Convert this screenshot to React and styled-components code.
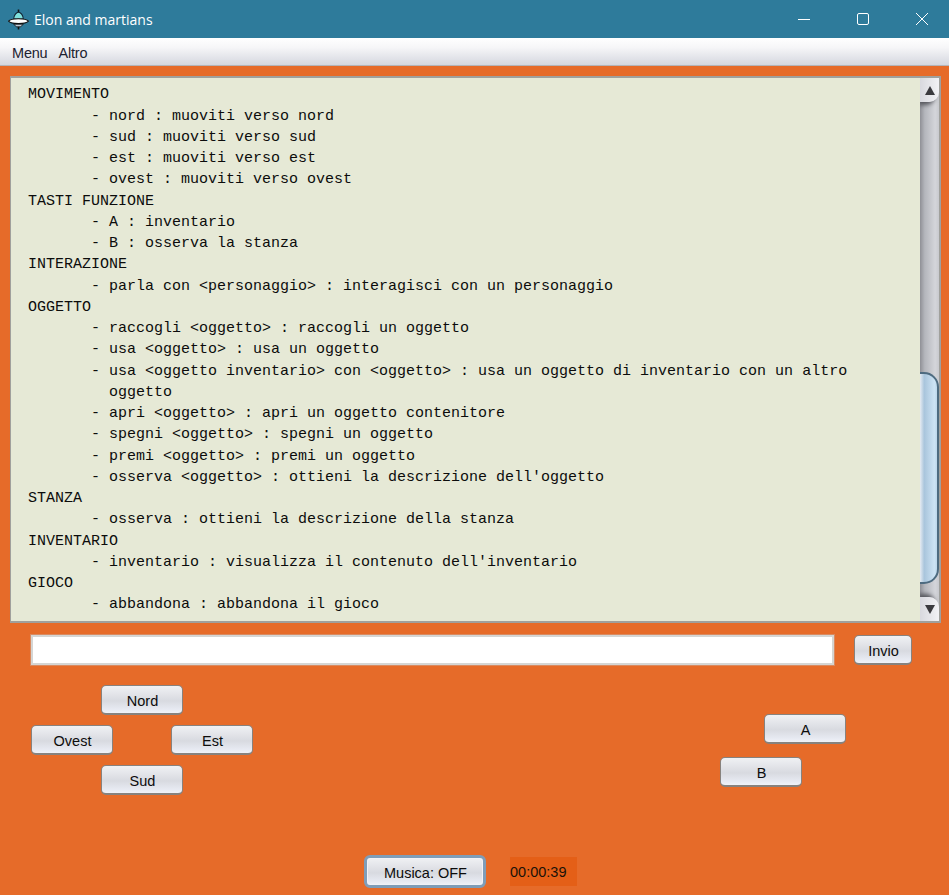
import React from "react";
import styled, { createGlobalStyle } from "styled-components";

const GlobalStyle = createGlobalStyle`
  html, body {
    margin: 0;
    padding: 0;
    background: #e66b29;
  }
  * {
    box-sizing: border-box;
  }
`;

const Window = styled.div`
  width: 949px;
  height: 895px;
  display: flex;
  flex-direction: column;
  overflow: hidden;
  font-family: "Liberation Sans", Arial, sans-serif;
  background: #e66b29;
`;

const TitleBar = styled.div`
  height: 38px;
  display: flex;
  align-items: center;
  background: #2e7b9b;
  color: #fff;
`;

const AppIcon = styled.svg`
  width: 21px;
  height: 21px;
  margin-left: 8px;
`;

const Title = styled.div`
  margin-left: 5px;
  font-family: "Open Sans", sans-serif;
  font-size: 14px;
  flex: 1;
`;

const WinButton = styled.div`
  width: 59px;
  height: 38px;
  padding-left: 4px;
  display: flex;
  align-items: center;
  justify-content: center;
`;

const MenuBar = styled.div`
  height: 28px;
  display: flex;
  align-items: center;
  gap: 11px;
  padding: 2px 0 0 12px;
  background: linear-gradient(#ffffff 0%, #f6f6f8 35%, #d5d7df 100%);
  border-bottom: 1px solid #b4b4b8;
  font-size: 14.5px;
  letter-spacing: -0.2px;
  color: #1c2230;
`;

const Content = styled.div`
  flex: 1;
  display: flex;
  flex-direction: column;
  padding: 10px 8px 0 10px;
`;

const Console = styled.div`
  height: 547px;
  display: flex;
  border: 1px solid #a0a09c;
  border-width: 2px 2px 2px 1px;
`;

const ConsoleText = styled.pre`
  flex: 1;
  margin: 0;
  padding: 6.4px 0 0 17px;
  overflow: hidden;
  background: #e6e9d6;
  color: #0c0c0c;
  font-family: "Liberation Mono", "Courier New", monospace;
  font-size: 15px;
  line-height: 21.25px;
`;

const ScrollBar = styled.div`
  width: 19px;
  display: flex;
  flex-direction: column;
  overflow: hidden;
  background: linear-gradient(90deg, #8f9096, #b4b6bc 25%, #d4d5da 80%, #c8c9ce);
`;

const ArrowButton = styled.div`
  height: 24px;
  padding-left: 1px;
  display: flex;
  align-items: center;
  justify-content: center;
  background: linear-gradient(90deg, #d8d9de, #f2f2f5);
  border-radius: ${(p) => (p.$up ? "0 0 10px 0" : "0 10px 0 0")};
  box-shadow: ${(p) =>
    p.$up ? "-3px 4px 4px -1px #55565c" : "-3px -4px 4px -1px #55565c"};
`;

const Arrow = styled.div`
  width: 0;
  height: 0;
  border-left: 5px solid transparent;
  border-right: 5px solid transparent;
  ${(p) =>
    p.$up ? "border-bottom: 9px solid #3a3a3e;" : "border-top: 9px solid #3a3a3e;"}
`;

const Track = styled.div`
  flex: 1;
  padding-top: 270px;
  padding-bottom: 13px;
  display: flex;
  flex-direction: column;
`;

const Thumb = styled.div`
  flex: 1;
  background: linear-gradient(90deg, #e6ebf1, #a9c5dc 25%, #cde3f4 85%, #bcd6ea);
  border: 2px solid #4e6b80;
  border-left: none;
  border-radius: 0 15px 15px 0;
`;

const InputRow = styled.div`
  display: flex;
  align-items: center;
  padding: 12px 0 0 21px;
  gap: 20px;
`;

const TextField = styled.div`
  width: 803px;
  height: 30px;
  background: #fff;
  border: 2px solid #d5d5d3;
  box-shadow: 0 0 0 1px #d98a60;
`;

const Button = styled.div`
  width: ${(p) => p.$w || 82}px;
  height: 30px;
  padding: 2px 0 0 1px;
  display: flex;
  align-items: center;
  justify-content: center;
  font-size: 14.5px;
  color: #0c0c0c;
  border: 1px solid #87827e;
  border-bottom-width: 2px;
  border-radius: 5px;
  background: linear-gradient(#f0f1f4 0%, #d8dae0 55%, #e6e9f1 85%, #f0f2f8 100%);
`;

const Controls = styled.div`
  display: flex;
  justify-content: space-between;
  padding: 20px 95px 0 21px;
`;

const DPad = styled.div`
  width: 222px;
  display: flex;
  flex-direction: column;
  gap: 10px;
`;

const DPadRow = styled.div`
  display: flex;
  justify-content: ${(p) => (p.$split ? "space-between" : "center")};
`;

const ActionPad = styled.div`
  width: 126px;
  padding-top: 29px;
  display: flex;
  flex-direction: column;
  gap: 13px;
`;

const ActionSlot = styled.div`
  align-self: ${(p) => (p.$right ? "flex-end" : "flex-start")};
`;

const Footer = styled.div`
  display: flex;
  align-items: center;
  gap: 24px;
  padding: 60px 0 0 354px;
`;

const MusicButton = styled(Button)`
  width: 122px;
  height: 33px;
  border: 3px solid #7f9db8;
  border-radius: 6px;
  box-shadow: inset 0 0 0 1px #f2f2f6;
`;

const Timer = styled.div`
  width: 67px;
  height: 29px;
  display: flex;
  align-items: center;
  font-size: 14.5px;
  color: #1a1208;
  background: #e45f17;
`;

const lines = `MOVIMENTO
       - nord : muoviti verso nord
       - sud : muoviti verso sud
       - est : muoviti verso est
       - ovest : muoviti verso ovest
TASTI FUNZIONE
       - A : inventario
       - B : osserva la stanza
INTERAZIONE
       - parla con <personaggio> : interagisci con un personaggio
OGGETTO
       - raccogli <oggetto> : raccogli un oggetto
       - usa <oggetto> : usa un oggetto
       - usa <oggetto inventario> con <oggetto> : usa un oggetto di inventario con un altro
         oggetto
       - apri <oggetto> : apri un oggetto contenitore
       - spegni <oggetto> : spegni un oggetto
       - premi <oggetto> : premi un oggetto
       - osserva <oggetto> : ottieni la descrizione dell'oggetto
STANZA
       - osserva : ottieni la descrizione della stanza
INVENTARIO
       - inventario : visualizza il contenuto dell'inventario
GIOCO
       - abbandona : abbandona il gioco`;

function UfoIcon() {
  return (
    <AppIcon viewBox="0 0 20 20">
      <path d="M10 0.500v2.500" stroke="#111" strokeWidth="1.500" />
      <path d="M5.500 9.500c0-3.500 2.500-6.500 4.500-6.500s4.500 3 4.500 6.500z" fill="#7fe0dc" stroke="#123" strokeWidth="1" />
      <path d="M0.500 11.500c2.500-3 16.500-3 19 0-2.500 3-16.500 3-19 0z" fill="#fff" stroke="#111" strokeWidth="1" />
      <path d="M5.500 14.500h9l-2.500 2.500h-4z" fill="#c3ccd8" stroke="#111" strokeWidth="0.800" />
      <path d="M10 17v2.500" stroke="#111" strokeWidth="1.500" />
    </AppIcon>
  );
}

export default function App() {
  return (
    <Window>
      <GlobalStyle />
      <TitleBar>
        <UfoIcon />
        <Title>Elon and martians</Title>
        <WinButton>
          <svg width="12" height="12" viewBox="0 0 12 12">
            <path d="M0 6.500h12" stroke="#fff" />
          </svg>
        </WinButton>
        <WinButton>
          <svg width="12" height="12" viewBox="0 0 12 12">
            <rect x="0.500" y="0.500" width="11" height="11" rx="1.500" fill="none" stroke="#fff" />
          </svg>
        </WinButton>
        <WinButton>
          <svg width="12" height="12" viewBox="0 0 12 12">
            <path d="M0 0l12 12M12 0L0 12" stroke="#fff" />
          </svg>
        </WinButton>
      </TitleBar>
      <MenuBar>
        <span>Menu</span>
        <span>Altro</span>
      </MenuBar>
      <Content>
        <Console>
          <ConsoleText>{lines}</ConsoleText>
          <ScrollBar>
            <ArrowButton $up>
              <Arrow $up />
            </ArrowButton>
            <Track>
              <Thumb />
            </Track>
            <ArrowButton>
              <Arrow />
            </ArrowButton>
          </ScrollBar>
        </Console>
        <InputRow>
          <TextField />
          <Button $w={58}>Invio</Button>
        </InputRow>
        <Controls>
          <DPad>
            <DPadRow>
              <Button>Nord</Button>
            </DPadRow>
            <DPadRow $split>
              <Button>Ovest</Button>
              <Button>Est</Button>
            </DPadRow>
            <DPadRow>
              <Button>Sud</Button>
            </DPadRow>
          </DPad>
          <ActionPad>
            <ActionSlot $right>
              <Button>A</Button>
            </ActionSlot>
            <ActionSlot>
              <Button>B</Button>
            </ActionSlot>
          </ActionPad>
        </Controls>
        <Footer>
          <MusicButton>Musica: OFF</MusicButton>
          <Timer>00:00:39</Timer>
        </Footer>
      </Content>
    </Window>
  );
}
